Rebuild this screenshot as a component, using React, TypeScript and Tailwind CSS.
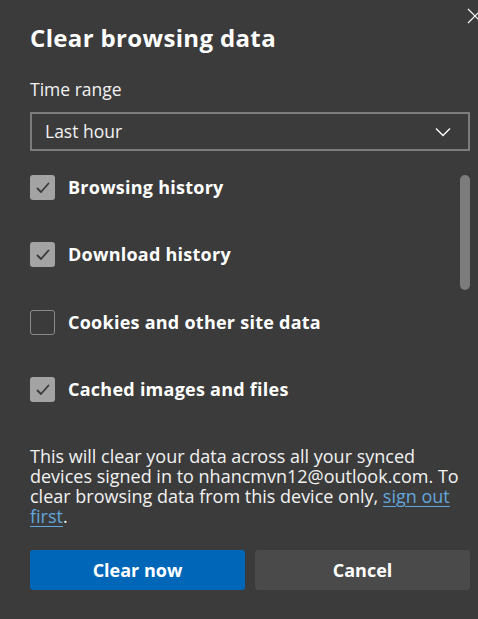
import React, { useState } from "react";

const font = { fontFamily: '"Open Sans", "Noto Sans", sans-serif' };

const items = [
  { label: "Browsing history", checked: true },
  { label: "Download history", checked: true },
  { label: "Cookies and other site data", checked: false },
  { label: "Cached images and files", checked: true },
];

const Check = ({ checked }: { checked: boolean }) =>
  checked ? (
    <div className="w-[25px] h-[25px] rounded-[3px] bg-[#a3a3a3] flex items-center justify-center shrink-0">
      <svg width="16" height="16" viewBox="0 0 16 16" fill="none">
        <path d="M2.5 8.5 L6 12 L13.5 3.5" stroke="#3a3a3a" strokeWidth="1.8" strokeLinecap="round" strokeLinejoin="round" />
      </svg>
    </div>
  ) : (
    <div className="w-[25px] h-[25px] rounded-[3px] border border-[#8a8a8a] shrink-0" />
  );

const App = () => {
  const [state, setState] = useState(items);

  return (
    <div className="relative w-[478px] h-[619px] overflow-hidden bg-[#3b3b3b] text-white" style={font}>
      <button className="absolute left-[467px] top-[8px]">
        <svg width="16" height="16" viewBox="0 0 16 16">
          <path d="M1 1 L15 15 M15 1 L1 15" stroke="#ffffff" strokeWidth="1.2" />
        </svg>
      </button>

      <div className="flex flex-col pl-[30px] pr-[8px] pt-[23px]">
        <h1 className="text-[24px] leading-[30px] font-bold tracking-[0.35px]">Clear browsing data</h1>

        <div className="mt-[25px] text-[17.5px] leading-[22px] text-[#f2f2f2]">Time range</div>

        <div className="mt-[12px] h-[39px] border-2 border-[#7c7c7c] flex items-center justify-between pl-[13px] pr-[17px] text-[17.5px] text-[#f2f2f2]">
          <span>Last hour</span>
          <svg width="16" height="10" viewBox="0 0 16 10" fill="none">
            <path d="M1 1.5 L8 8.5 L15 1.5" stroke="#ffffff" strokeWidth="1.3" />
          </svg>
        </div>

        <div className="mt-[24px] flex">
          <div className="flex-1 flex flex-col gap-[42.4px]">
            {state.map((it, i) => (
              <label
                key={it.label}
                className="flex items-center gap-[13px] cursor-pointer"
                onClick={() =>
                  setState((s) => s.map((x, j) => (j === i ? { ...x, checked: !x.checked } : x)))
                }
              >
                <Check checked={it.checked} />
                <span className="text-[18px] leading-[25px] font-bold tracking-[0.25px]">{it.label}</span>
              </label>
            ))}
          </div>
          <div className="w-[10px] h-[115px] rounded-full bg-[#7c7c7c]" />
        </div>

        <p className="mt-[44px] text-[18px] leading-[20px] text-[#f2f2f2]">
          This will clear your data across all your synced devices signed in to nhancmvn12@outlook.com. To
          clear browsing data from this device only,{" "}
          <a className="text-[#62a6de] underline underline-offset-[3px]">sign out first</a>.
        </p>

        <div className="mt-[24px] flex gap-[10px]">
          <button className="flex-1 h-[40px] rounded-[3px] bg-[#0067b8] text-[18px] font-bold text-white">
            Clear now
          </button>
          <button className="flex-1 h-[40px] rounded-[3px] bg-[#4a4a4a] text-[18px] font-bold text-white">
            Cancel
          </button>
        </div>
      </div>
    </div>
  );
};

export default App;
